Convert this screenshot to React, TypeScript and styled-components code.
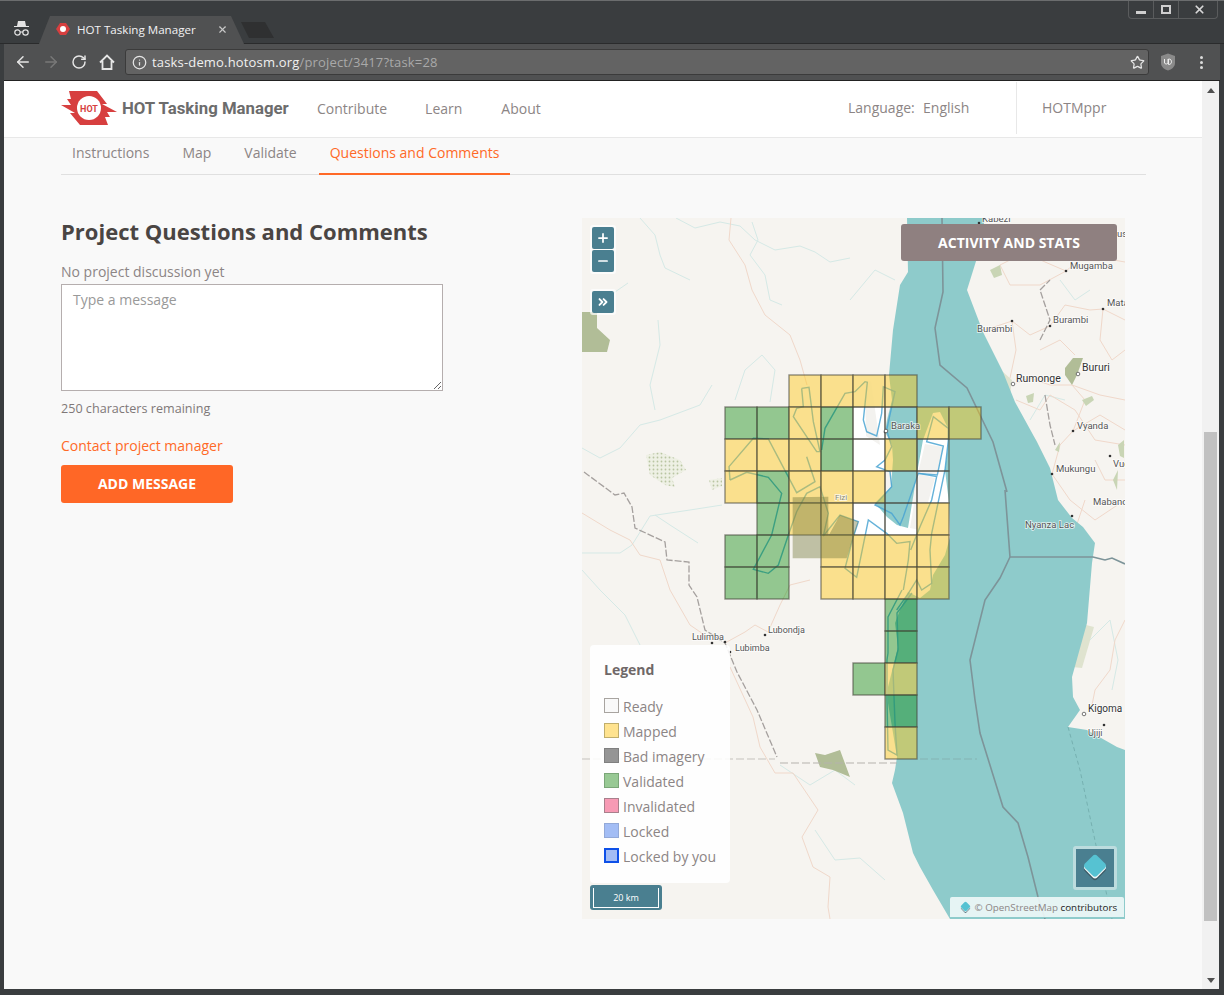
import React from "react";
import styled, { createGlobalStyle } from "styled-components";
import { ArrowLeft, ArrowRight, RotateCw, Star, Info, X, Plus, Minus, ChevronsRight } from "lucide-react";

const GlobalStyle = createGlobalStyle`
  html, body {
    margin: 0;
    padding: 0;
    background: #3a3d3f;
    overflow: hidden;
  }
  * {
    box-sizing: border-box;
  }
`;

const Window = styled.div`
  position: relative;
  width: 1224px;
  height: 995px;
  display: flex;
  flex-direction: column;
  background: #3a3d3f;
  border-top: 1px solid #6b6d6e;
  font-family: "Open Sans", sans-serif;
  overflow: hidden;
`;

const TitleBar = styled.div`
  height: 43px;
  flex: none;
  display: flex;
  align-items: flex-end;
  padding-left: 13px;
  border-bottom: 1px solid #2a2b2c;
`;

const Incognito = styled.svg`
  width: 17px;
  height: 17px;
  margin-bottom: 6px;
  margin-right: 9px;
  flex: none;
`;

const Tab = styled.div`
  width: 205px;
  height: 28px;
  margin-bottom: -1px;
  display: flex;
  align-items: center;
  padding: 0 0 2px 17px;
  color: #f2f2f2;
  font-size: 11.6px;
  background: #505152;
  clip-path: polygon(0 100%, 11px 0, 192px 0, 205px 100%);
  flex: none;
  z-index: 1;
`;

const TabTitle = styled.span`
  flex: 1;
  margin-left: 7px;
  white-space: nowrap;
`;

const TabClose = styled(X)`
  color: #c8c8c8;
  margin-right: 16px;
`;

const NewTab = styled.div`
  width: 33px;
  height: 16px;
  margin-left: -3px;
  margin-bottom: 5px;
  background: #2f3031;
  clip-path: polygon(0 0, 24px 0, 33px 100%, 8px 100%);
`;

const WindowControls = styled.div`
  position: absolute;
  top: 0;
  right: 6px;
  width: 90px;
  height: 18px;
  display: grid;
  grid-template-columns: 25px 25px 40px;
  border: 1px solid #5a5c5d;
  border-top: 0;
  border-radius: 0 0 4px 4px;
  color: #d8d8d8;
`;

const ControlCell = styled.div<{ $last?: boolean }>`
  display: flex;
  align-items: center;
  justify-content: center;
  border-right: ${(p) => (p.$last ? "0" : "1px solid #5a5c5d")};
`;

const MinimizeMark = styled.div`
  width: 10px;
  height: 3px;
  margin-top: 5px;
  background: #cfcfcf;
`;

const MaximizeMark = styled.div`
  width: 10px;
  height: 9px;
  border: 2px solid #cfcfcf;
`;

const Toolbar = styled.div`
  height: 37px;
  flex: none;
  display: flex;
  align-items: center;
  background: #505152;
  padding: 0 0 0 10px;
  margin: 0 4px;
  border-bottom: 1px solid #222;
  color: #e6e6e6;
`;

const NavButton = styled.div<{ $dim?: boolean }>`
  width: 18px;
  height: 18px;
  margin-right: 10px;
  display: flex;
  align-items: center;
  justify-content: center;
  color: ${(p) => (p.$dim ? "#787878" : "#e6e6e6")};
`;

const AddressBar = styled.div`
  width: 1024px;
  height: 26px;
  margin-left: -1px;
  display: flex;
  align-items: center;
  background: #636363;
  border: 1px solid #3b3b3b;
  border-radius: 3px;
  padding: 0 3px 0 6px;
  font-size: 13px;
  letter-spacing: 0.17px;
`;

const Url = styled.span`
  flex: 1;
  margin-left: 5px;
  color: #f0f0f0;
`;

const UrlPath = styled.span`
  color: #a9a9a9;
`;

const Shield = styled.svg`
  width: 16px;
  height: 18px;
  margin-left: 11px;
`;

const Dots = styled.div`
  display: grid;
  gap: 2px;
  margin-left: 24px;
`;

const Dot = styled.div`
  width: 3px;
  height: 3px;
  border-radius: 50%;
  background: #dcdcdc;
`;

const Viewport = styled.div`
  flex: 1;
  display: flex;
  margin: 0 5px 6px 4px;
  min-height: 0;
`;

const Page = styled.main`
  width: 1198px;
  background: #f9f9f9;
  color: #8c8585;
  font-size: 14px;
  overflow: hidden;
`;

const Header = styled.header`
  height: 57px;
  display: flex;
  align-items: center;
  background: #fff;
  border-bottom: 1px solid #e8e8e8;
  padding: 0 0 2px 57px;
`;

const LogoMark = styled.svg`
  width: 56px;
  height: 35px;
  flex: none;
`;

const Brand = styled.div`
  margin-left: 5px;
  width: 195px;
  font-family: Roboto, sans-serif;
  font-weight: 700;
  font-size: 16.8px;
  color: #6c6c6c;
  white-space: nowrap;
`;

const NavLink = styled.a<{ $gap: number }>`
  margin-right: ${(p) => p.$gap}px;
  white-space: nowrap;
`;

const HeaderRight = styled.div`
  margin-left: auto;
  height: 52px;
  margin-bottom: 1px;
  display: flex;
  align-items: center;
`;

const Language = styled.div`
  width: 168px;
  white-space: pre;
  word-spacing: 0.5px;
`;

const UserBox = styled.div`
  width: 186px;
  height: 100%;
  padding-left: 25px;
  display: flex;
  align-items: center;
  border-left: 1px solid #e8e8e8;
`;

const Tabs = styled.nav`
  margin: 0 56px 0 57px;
  height: 37px;
  display: flex;
  border-bottom: 1px solid #e0e0e0;
`;

const TabLink = styled.a<{ $active?: boolean }>`
  height: 37px;
  padding: 5px 11px 0;
  margin-right: 11px;
  line-height: 20px;
  color: ${(p) => (p.$active ? "#ff6927" : "#8c8585")};
  border-bottom: 2px solid ${(p) => (p.$active ? "#ff6927" : "transparent")};
  white-space: nowrap;
`;

const Content = styled.div`
  display: flex;
  padding: 43px 0 0 57px;
`;

const Discussion = styled.section`
  width: 382px;
  margin-right: 139px;
  flex: none;
`;

const Heading = styled.h2`
  margin: -1px 0 0;
  font-size: 22px;
  line-height: 28px;
  font-weight: 700;
  color: #4a4543;
  white-space: nowrap;
`;

const Note = styled.p`
  margin: 17px 0 0;
  line-height: 19px;
`;

const MessageBox = styled.textarea`
  display: block;
  width: 382px;
  height: 107px;
  margin: 3px 0 0;
  padding: 5px 11px;
  border: 1px solid #b5aeae;
  background: #fff;
  font-family: "Open Sans", sans-serif;
  font-size: 14px;
  line-height: 20px;
  outline: none;
  &::placeholder {
    color: #999;
  }
`;

const Remaining = styled.p`
  margin: 9px 0 0;
  font-size: 12.6px;
  line-height: 18px;
  color: #7f7878;
`;

const ContactLink = styled.a`
  display: block;
  margin-top: 18px;
  line-height: 20px;
  color: #ff6927;
`;

const AddButton = styled.button`
  display: block;
  width: 172px;
  height: 38px;
  margin-top: 9px;
  padding: 0 0 2px;
  border: 0;
  border-radius: 3px;
  background: #ff6726;
  color: #fff;
  font-family: "Open Sans", sans-serif;
  font-size: 14px;
  font-weight: 700;
  text-transform: uppercase;
`;

const MapPanel = styled.div`
  position: relative;
  width: 543px;
  height: 701px;
  flex: none;
  overflow: hidden;
`;

const MapDrawing = styled.svg`
  display: block;
  width: 543px;
  height: 701px;
  font-family: Roboto, sans-serif;
`;

const ZoomGroup = styled.div`
  position: absolute;
  top: 7px;
  left: 8px;
  padding: 2px;
  display: grid;
  gap: 1px;
  background: rgba(255, 255, 255, 0.7);
  border-radius: 3px;
`;

const CollapseGroup = styled(ZoomGroup)`
  top: 71px;
`;

const MapControl = styled.div`
  width: 22px;
  height: 22px;
  display: flex;
  align-items: center;
  justify-content: center;
  background: #4a7f90;
  border-radius: 2px;
  color: #fff;
`;

const ActivityButton = styled.button`
  position: absolute;
  top: 6px;
  left: 319px;
  width: 216px;
  height: 37px;
  border: 0;
  border-radius: 3px;
  background: #8f8080;
  color: #fff;
  font-family: "Open Sans", sans-serif;
  font-size: 14px;
  font-weight: 700;
  text-transform: uppercase;
`;

const Legend = styled.aside`
  position: absolute;
  left: 8px;
  top: 427px;
  width: 140px;
  height: 238px;
  padding: 15px 14px 0;
  background: rgba(255, 255, 255, 0.88);
  border-radius: 4px;
`;

const LegendTitle = styled.div`
  font-weight: 700;
  color: #6f6868;
  line-height: 19px;
  margin-bottom: 15px;
`;

const LegendRow = styled.div`
  height: 25px;
  display: flex;
  align-items: center;
  white-space: nowrap;
`;

const Swatch = styled.span<{ $fill: string; $line: string; $wide?: boolean }>`
  width: 15px;
  height: 15px;
  margin-right: 4px;
  margin-top: -3px;
  flex: none;
  background: ${(p) => p.$fill};
  border: ${(p) => (p.$wide ? 2 : 1)}px solid ${(p) => p.$line};
`;

const ScaleBar = styled.div`
  position: absolute;
  left: 8px;
  top: 667px;
  width: 72px;
  height: 25px;
  padding: 3px 3px 2px;
  background: #4a7f90;
  border-radius: 3px;
`;

const ScaleInner = styled.div`
  height: 100%;
  display: flex;
  align-items: center;
  justify-content: center;
  border: 1px solid #fff;
  border-top: 0;
  color: #fff;
  font-size: 9px;
`;

const LayerSwitch = styled.div`
  position: absolute;
  left: 491px;
  top: 628px;
  width: 44px;
  height: 44px;
  display: flex;
  align-items: center;
  justify-content: center;
  background: #4a7f90;
  border: 3px solid #bcdcde;
  border-radius: 3px;
`;

const Attribution = styled.div`
  position: absolute;
  left: 368px;
  top: 679px;
  width: 174px;
  height: 21px;
  display: flex;
  align-items: center;
  padding-left: 9px;
  background: rgba(240, 248, 248, 0.9);
  border-bottom: 1px solid #8ecbcb;
  border-radius: 2px 2px 0 0;
  font-size: 9.8px;
  color: #8c8585;
  white-space: pre;
`;

const AttributionDark = styled.span`
  color: #222;
`;

const Scrollbar = styled.div`
  width: 17px;
  flex: none;
  display: flex;
  flex-direction: column;
  align-items: center;
  background: #f1f1f1;
`;

const ScrollArrow = styled.div<{ $down?: boolean }>`
  width: 0;
  height: 0;
  margin: ${(p) => (p.$down ? "auto 0 6px" : "7px 0 0")};
  border-left: 4px solid transparent;
  border-right: 4px solid transparent;
  border-${(p) => (p.$down ? "top" : "bottom")}: 5px solid #505050;
`;

const ScrollThumb = styled.div`
  width: 13px;
  height: 489px;
  margin-top: 339px;
  background: #c1c1c1;
`;

type Pt = [number, number];

const CELL = 32;
const GX = 725;
const GY = 375;

// colour, col, row
const cells: [string, number, number][] = [
  ["m", 2, 0], ["m", 3, 0], ["m", 4, 0], ["m", 5, 0],
  ["v", 0, 1], ["v", 1, 1], ["m", 2, 1], ["v", 3, 1], ["r", 4, 1], ["r", 5, 1], ["m", 6, 1], ["m", 7, 1],
  ["m", 0, 2], ["m", 1, 2], ["m", 2, 2], ["v", 3, 2], ["r", 4, 2], ["m", 5, 2], ["r", 6, 2],
  ["m", 0, 3], ["v", 1, 3], ["m", 2, 3], ["m", 3, 3], ["m", 4, 3], ["r", 5, 3], ["r", 6, 3],
  ["v", 1, 4], ["m", 2, 4], ["m", 3, 4], ["r", 4, 4], ["r", 5, 4], ["m", 6, 4],
  ["v", 0, 5], ["v", 1, 5], ["m", 3, 5], ["m", 4, 5], ["m", 5, 5], ["m", 6, 5],
  ["v", 0, 6], ["v", 1, 6], ["m", 3, 6], ["m", 4, 6], ["m", 5, 6], ["m", 6, 6],
  ["v", 5, 7], ["v", 5, 8], ["v", 4, 9], ["m", 5, 9], ["v", 5, 10], ["m", 5, 11],
];

const cellFill: Record<string, string> = {
  m: "rgba(255,200,21,0.45)",
  v: "rgba(0,132,0,0.4)",
  r: "rgba(255,255,255,0)",
};

const lake: Pt[] = [
  [907, 218], [908, 272], [900, 285], [893, 330], [889, 375], [892, 400], [887, 420], [885, 432], [892, 445], [893, 460],
  [891, 487], [885, 493], [875, 503], [887, 517], [897, 525], [908, 528], [917, 473], [923, 440], [933, 413], [940, 412],
  [949, 430], [948, 445], [945, 470], [949, 503], [950, 537], [945, 555], [933, 575], [930, 590], [920, 598], [908, 592],
  [900, 610], [895, 623], [898, 647], [893, 667], [888, 687], [888, 703], [893, 733], [897, 757], [895, 770], [892, 783],
  [903, 813], [913, 853], [920, 867], [933, 890], [950, 919], [1125, 919], [1125, 750], [1117, 747], [1087, 730], [1068, 727],
  [1080, 710], [1073, 697], [1072, 677], [1087, 623], [1092, 563], [1095, 543], [1083, 527], [1072, 518], [1058, 500], [1050, 468],
  [1037, 442], [1015, 402], [1003, 372], [983, 332], [967, 290], [977, 258], [985, 218],
];

const z3 = (pts: Pt[]): Pt[] => pts.map(([x, y]) => [700 + x / 3, 360 + y / 3] as Pt);

const aoi: Pt[][] = [
  z3([[305, 85], [327, 82], [340, 185], [360, 275], [350, 275], [280, 170], [290, 145], [310, 140], [305, 85]]),
  z3([[365, 270], [375, 205], [435, 100], [465, 95], [495, 65], [502, 67], [490, 180], [500, 215], [530, 228], [545, 160], [550, 80], [585, 95], [560, 210], [575, 260], [555, 300], [530, 320], [570, 335], [575, 380], [525, 435], [575, 460], [600, 495], [610, 470], [655, 340], [710, 350], [695, 420], [660, 500], [632, 570]]),
  z3([[655, 340], [712, 345], [730, 258], [680, 245], [700, 170], [745, 205], [745, 240], [735, 330], [695, 520], [690, 570], [695, 670], [665, 690], [650, 660], [625, 700], [590, 750]]),
  z3([[90, 360], [87, 320], [160, 235], [205, 237], [290, 398], [345, 365], [320, 290]]),
  z3([[90, 360], [140, 337], [205, 352], [245, 400], [215, 525], [160, 628], [205, 640], [235, 615], [265, 525], [290, 455], [320, 400], [360, 380], [385, 460], [370, 528], [420, 465], [475, 485], [460, 530], [435, 625], [470, 652], [505, 480], [560, 520], [590, 550], [630, 545], [625, 600], [610, 690]]),
  [[912, 593], [897, 613], [898, 650], [893, 670], [895, 723], [897, 755], [888, 750], [887, 700], [887, 660], [888, 653], [888, 617], [902, 590]],
];

const rivers: Pt[][] = [
  [[640, 218], [655, 235], [660, 255], [665, 268], [690, 280]],
  [[676, 218], [695, 228], [720, 222], [740, 226], [755, 240], [775, 250], [800, 246], [815, 252], [830, 262], [850, 258]],
  [[752, 222], [758, 240], [750, 255], [765, 275], [770, 300], [782, 305]],
  [[582, 330], [600, 310], [615, 292], [628, 283]],
  [[658, 320], [660, 345], [655, 365], [650, 385], [655, 410]],
  [[770, 402], [775, 370], [762, 355], [745, 370], [735, 400]],
  [[582, 448], [600, 458], [620, 448], [640, 425], [660, 420], [700, 405], [712, 385]],
  [[582, 553], [620, 553], [632, 545], [650, 516], [690, 510], [722, 505]],
  [[655, 515], [670, 525], [698, 543]],
  [[582, 570], [600, 590], [625, 615], [640, 645]],
  [[850, 300], [875, 270], [895, 280]],
  [[815, 830], [835, 860], [860, 858], [885, 880]],
  [[780, 765], [810, 785], [835, 770], [855, 785]],
  [[1030, 420], [1045, 395], [1065, 400]],
  [[1060, 280], [1075, 300], [1090, 290]],
  [[1090, 640], [1110, 620], [1118, 660], [1112, 690]],
];

const roads: Pt[][] = [
  [[731, 218], [729, 240], [745, 265], [752, 290], [765, 315], [790, 335], [800, 360], [807, 385]],
  [[582, 513], [610, 530], [630, 540], [640, 555], [660, 560], [670, 590], [690, 625], [712, 640]],
  [[725, 643], [745, 632], [755, 625], [768, 632], [780, 605], [790, 585], [810, 580]],
  [[730, 667], [753, 717], [760, 747], [775, 773], [793, 773], [818, 810], [802, 837], [813, 867], [830, 877], [828, 907], [830, 919]],
  [[1016, 383], [1030, 378], [1050, 385], [1072, 385], [1100, 395], [1125, 400]],
  [[1012, 321], [1030, 335], [1050, 326], [1065, 305], [1090, 310], [1103, 309], [1125, 320]],
  [[985, 330], [1012, 321], [1016, 350], [1010, 378]],
  [[1066, 271], [1040, 285], [1010, 285], [1000, 265], [1030, 250]],
  [[1052, 474], [1060, 445], [1073, 431], [1100, 415], [1125, 430]],
  [[1052, 474], [1070, 500], [1095, 520], [1125, 500]],
  [[1073, 431], [1085, 400], [1072, 385]],
  [[1125, 620], [1115, 640], [1110, 670], [1095, 690], [1092, 705]],
  [[1058, 505], [1075, 530], [1085, 500]],
  [[1020, 250], [1045, 262], [1066, 271], [1085, 255], [1125, 262]],
  [[1016, 400], [1040, 410], [1050, 395], [1075, 410], [1095, 440], [1125, 445]],
  [[1103, 309], [1100, 340], [1112, 360], [1125, 350]],
  [[1040, 350], [1060, 340], [1075, 355]],
  [[1095, 460], [1105, 480], [1125, 480]],
  [[1000, 240], [1035, 225], [1075, 235]],
];

const borders: Pt[][] = [
  [[1005, 490], [1010, 557], [1093, 557], [1105, 560], [1112, 558], [1125, 564]],
  [[942, 218], [943, 292], [935, 328], [940, 365], [967, 388], [993, 442], [1007, 492]],
  [[1010, 557], [1000, 578], [985, 600], [970, 660], [975, 700], [980, 733], [1003, 807], [1018, 823], [1028, 857], [1038, 897], [1045, 919]],
];

const dashed: Pt[][] = [
  [[584, 472], [615, 495], [624, 493], [632, 507], [635, 528], [665, 542], [667, 560], [689, 562], [689, 585], [697, 597], [705, 630], [725, 643], [737, 672], [757, 710], [777, 757]],
  [[1040, 340], [1050, 320], [1040, 290], [1050, 280]],
  [[1045, 395], [1050, 425], [1055, 445]],
];

const forest: Pt[][] = [
  [[582, 312], [597, 312], [597, 328], [610, 340], [607, 352], [582, 352]],
  [[815, 753], [825, 755], [840, 750], [850, 777], [833, 770], [820, 767]],
  [[1065, 368], [1073, 358], [1083, 358], [1077, 375], [1072, 385], [1065, 375]],
];

const thicket: Pt[][] = [
  [[1026, 396], [1034, 393], [1033, 402], [1028, 403]],
  [[990, 270], [1000, 265], [1002, 275], [994, 278]],
  [[1118, 445], [1124, 440], [1124, 458], [1120, 456]],
  [[1082, 400], [1092, 396], [1094, 400], [1086, 406]],
  [[1055, 450], [1060, 442], [1059, 452]],
  [[1113, 480], [1118, 470], [1117, 490]],
];

const pale: Pt[][] = [
  [[1078, 623], [1094, 627], [1082, 668], [1072, 667]],
  [[1003, 372], [1012, 380], [1010, 395], [1001, 392]],
  [[1027, 428], [1036, 440], [1047, 463], [1037, 458]],
];

const stipple: Pt[][] = [
  [[646, 455], [660, 452], [680, 460], [686, 470], [672, 478], [675, 487], [665, 485], [650, 475]],
  [[709, 480], [722, 478], [722, 486], [712, 490]],
];

const labels: { t: string; x: number; y: number; s?: number; c?: string }[] = [
  { t: "Kabezi", x: 982, y: 222, s: 9.5 },
  { t: "us", x: 1117, y: 237, s: 9.5 },
  { t: "Mugamba", x: 1070, y: 269, s: 9.5 },
  { t: "Mata", x: 1107, y: 306, s: 9.5 },
  { t: "Burambi", x: 1053, y: 323, s: 9.5 },
  { t: "Burambi", x: 977, y: 332, s: 9.5 },
  { t: "Rumonge", x: 1016, y: 382, s: 10.5, c: "#333" },
  { t: "Bururi", x: 1082, y: 371, s: 10.5, c: "#333" },
  { t: "Vyanda", x: 1077, y: 429, s: 9.5 },
  { t: "Mukungu", x: 1056, y: 472, s: 9.5 },
  { t: "Vugizo", x: 1113, y: 467, s: 9.5 },
  { t: "Mabanda", x: 1093, y: 505, s: 9.5 },
  { t: "Nyanza Lac", x: 1025, y: 528, s: 9.5 },
  { t: "Baraka", x: 891, y: 429, s: 9.5 },
  { t: "Fizi", x: 835, y: 500, s: 8, c: "#8a8a70" },
  { t: "Lulimba", x: 692, y: 640, s: 9 },
  { t: "Lubondja", x: 768, y: 633, s: 9 },
  { t: "Lubimba", x: 735, y: 651, s: 9 },
  { t: "Kigoma", x: 1088, y: 712, s: 10, c: "#333" },
  { t: "Ujiji", x: 1088, y: 736, s: 9 },
];

const dots: Pt[] = [
  [1066, 271], [1103, 309], [1050, 326], [1012, 321], [1073, 431], [1052, 474], [1110, 456],
  [1072, 516], [885, 432], [712, 643], [765, 635], [730, 652], [725, 642], [1104, 725], [979, 223],
];

const rings: Pt[] = [[1013, 384], [1078, 374], [1084, 714], [886, 431]];

const toPoints = (pts: Pt[]) => pts.map((p) => p.join(",")).join(" ");

const legendItems = [
  { label: "Ready", fill: "#f9f9f9", line: "#a8a4a0" },
  { label: "Mapped", fill: "#ffe38f", line: "#c0ae6c" },
  { label: "Bad imagery", fill: "#959595", line: "#808080" },
  { label: "Validated", fill: "#98c994", line: "#7ba678" },
  { label: "Invalidated", fill: "#f79ab4", line: "#a8808c" },
  { label: "Locked", fill: "#a3bdf5", line: "#93a9d8" },
  { label: "Locked by you", fill: "#a3bdf5", line: "#0e50e8", wide: true },
];

function Diamond({ size }: { size: number }) {
  return (
    <svg width={size} height={size} viewBox="0 0 26 26">
      <rect x="5.5" y="6.5" width="15" height="15" rx="3" fill="#3c5a64" transform="rotate(45 13 14)" />
      <rect x="5.5" y="5" width="15" height="15" rx="3" fill="#f2f8f8" transform="rotate(45 13 12.5)" />
      <rect x="5.5" y="3.5" width="15" height="15" rx="3" fill="#56c2d2" transform="rotate(45 13 11)" />
    </svg>
  );
}

function MapArt() {
  return (
    <MapDrawing viewBox="582 218 543 701">
      <defs>
        <pattern id="stip" width="4" height="4" patternUnits="userSpaceOnUse">
          <rect width="4" height="4" fill="#eef0e4" />
          <circle cx="1.5" cy="1.5" r="0.9" fill="#b9c5a2" />
        </pattern>
      </defs>
      <rect x="582" y="218" width="543" height="701" fill="#f6f4f0" />
      {pale.map((p, i) => (
        <polygon key={i} points={toPoints(p)} fill="#dfe3cf" />
      ))}
      {rivers.map((p, i) => (
        <polyline key={i} points={toPoints(p)} fill="none" stroke="#d5e9e6" strokeWidth="1" />
      ))}
      {roads.map((p, i) => (
        <polyline key={i} points={toPoints(p)} fill="none" stroke="#f0d8ca" strokeWidth="1" />
      ))}
      {dashed.map((p, i) => (
        <polyline key={i} points={toPoints(p)} fill="none" stroke="#a5a09e" strokeWidth="1.3" strokeDasharray="7 2" />
      ))}
      <rect x="853" y="407" width="32" height="64" fill="#fff" />
      <rect x="853" y="503" width="64" height="32" fill="#fff" />
      <rect x="917" y="439" width="32" height="64" fill="#fff" />
      {forest.map((p, i) => (
        <polygon key={i} points={toPoints(p)} fill="#b1bd97" />
      ))}
      {thicket.map((p, i) => (
        <polygon key={i} points={toPoints(p)} fill="#c9d5b5" />
      ))}
      {stipple.map((p, i) => (
        <polygon key={i} points={toPoints(p)} fill="url(#stip)" />
      ))}
      <polygon points={toPoints(lake)} fill="#8ecbcb" />
      <polygon points="865,382 871,381 880,445 866,436" fill="#f3f2ef" />
      <polygon points="925,444 943,447 937,474 918,473" fill="#f3f2ef" />
      <polygon points="919,474 935,478 920,530 910,528" fill="#f3f2ef" />
      {aoi.map((p, i) => (
        <polyline key={i} points={toPoints(p)} fill="none" stroke="#4aa5d2" strokeWidth="1.4" strokeOpacity="0.85" />
      ))}
      <polyline points="582,759 775,759" fill="none" stroke="#c5c2bd" strokeWidth="1" strokeDasharray="8 3" />
      <polyline points="780,763 897,763" fill="none" stroke="#b5b2ad" strokeWidth="1" strokeDasharray="8 3" />
      <polyline points="920,759 977,759" fill="none" stroke="#84b3b3" strokeWidth="1" strokeDasharray="8 3" />
      <polyline points="1068,727 1080,770 1097,850 1112,919" fill="none" stroke="#6fa8a8" strokeWidth="0.8" strokeDasharray="4 3" />
      {borders.map((p, i) => (
        <polyline key={i} points={toPoints(p)} fill="none" stroke="#7d9499" strokeWidth="1.6" />
      ))}
      {cells.map(([k, c, r], i) => (
        <rect
          key={i}
          x={GX + c * CELL}
          y={GY + r * CELL}
          width={CELL}
          height={CELL}
          fill={cellFill[k]}
          stroke="rgba(70,70,60,0.6)"
          strokeWidth="1.4"
        />
      ))}
      <polygon
        points={toPoints(z3([[278, 412], [385, 410], [385, 528], [420, 465], [475, 485], [440, 595], [278, 595]]))}
        fill="rgba(115,120,60,0.42)"
      />
      {dots.map(([x, y], i) => (
        <circle key={i} cx={x} cy={y} r="1.3" fill="#333" />
      ))}
      {rings.map(([x, y], i) => (
        <circle key={i} cx={x} cy={y} r="1.8" fill="#fff" stroke="#555" strokeWidth="0.8" />
      ))}
      {labels.map((l, i) => (
        <text
          key={i}
          x={l.x}
          y={l.y}
          fontSize={l.s}
          fill={l.c ?? "#555"}
          stroke="rgba(255,255,255,0.75)"
          strokeWidth="1.6"
          paintOrder="stroke"
        >
          {l.t}
        </text>
      ))}
    </MapDrawing>
  );
}

export default function App() {
  return (
    <>
      <GlobalStyle />
      <Window>
        <TitleBar>
          <Incognito viewBox="0 0 17 17">
            <path d="M5 1h7l1 5h3v1H1V6h3z" fill="#e4e4e4" />
            <circle cx="4.5" cy="12.5" r="2.7" fill="none" stroke="#e4e4e4" strokeWidth="1.2" />
            <circle cx="12.5" cy="12.5" r="2.7" fill="none" stroke="#e4e4e4" strokeWidth="1.2" />
            <path d="M7 12h3" stroke="#e4e4e4" />
          </Incognito>
          <Tab>
            <svg width="14" height="14" viewBox="0 0 14 14">
              <polygon points="4,1 10,1 14,7 10,13 4,13 0,7" fill="#d73f3f" />
              <circle cx="7" cy="7" r="3" fill="#fff" />
            </svg>
            <TabTitle>HOT Tasking Manager</TabTitle>
            <TabClose size={11} strokeWidth={2.5} />
          </Tab>
          <NewTab />
        </TitleBar>
        <WindowControls>
          <ControlCell>
            <MinimizeMark />
          </ControlCell>
          <ControlCell>
            <MaximizeMark />
          </ControlCell>
          <ControlCell $last>
            <X size={13} strokeWidth={3.2} />
          </ControlCell>
        </WindowControls>
        <Toolbar>
          <NavButton>
            <ArrowLeft size={18} strokeWidth={2} />
          </NavButton>
          <NavButton $dim>
            <ArrowRight size={18} strokeWidth={2} />
          </NavButton>
          <NavButton>
            <RotateCw size={16} strokeWidth={2.2} />
          </NavButton>
          <NavButton>
            <svg width="18" height="18" viewBox="0 0 18 18" fill="none" stroke="currentColor" strokeWidth="1.8">
              <path d="M2 9.5 9 2.5l7 7M4.5 8v8h9V8" />
            </svg>
          </NavButton>
          <AddressBar>
            <Info size={15} strokeWidth={2} />
            <Url>
              tasks-demo.hotosm.org<UrlPath>/project/3417?task=28</UrlPath>
            </Url>
            <Star size={15} strokeWidth={2} />
          </AddressBar>
          <Shield viewBox="0 0 16 18">
            <path d="M8 0.5 15 3v7c0 4-3.5 6.5-7 7.5C4.5 16.5 1 14 1 10V3z" fill="#8a8a8a" />
            <path d="M4.5 6v4a2 2 0 0 0 3.5 0V6M8.5 6v5.5c4 .5 4-6 0-5.5" fill="none" stroke="#eee" strokeWidth="1" />
          </Shield>
          <Dots>
            <Dot />
            <Dot />
            <Dot />
          </Dots>
        </Toolbar>
        <Viewport>
          <Page>
            <Header>
              <LogoMark viewBox="0 0 56 35">
                <polygon
                  points="8,0 36,0 46,13 41,13 56,21 46,21 49,26 44,26 47,34 19,34 9,22 14,22 0,14 10,14 6,8 10,8"
                  fill="#d73f3f"
                />
                <circle cx="28" cy="17" r="12" fill="#fff" />
                <text x="28" y="20.5" textAnchor="middle" fontSize="9" fontWeight="700" fontFamily="Roboto, sans-serif" fill="#d73f3f">
                  HOT
                </text>
              </LogoMark>
              <Brand>HOT Tasking Manager</Brand>
              <NavLink $gap={38}>Contribute</NavLink>
              <NavLink $gap={39}>Learn</NavLink>
              <NavLink $gap={0}>About</NavLink>
              <HeaderRight>
                <Language>Language:  English</Language>
                <UserBox>HOTMppr</UserBox>
              </HeaderRight>
            </Header>
            <Tabs>
              <TabLink>Instructions</TabLink>
              <TabLink>Map</TabLink>
              <TabLink>Validate</TabLink>
              <TabLink $active>Questions and Comments</TabLink>
            </Tabs>
            <Content>
              <Discussion>
                <Heading>Project Questions and Comments</Heading>
                <Note>No project discussion yet</Note>
                <MessageBox placeholder="Type a message" />
                <Remaining>250 characters remaining</Remaining>
                <ContactLink>Contact project manager</ContactLink>
                <AddButton>Add message</AddButton>
              </Discussion>
              <MapPanel>
                <MapArt />
                <ZoomGroup>
                  <MapControl>
                    <Plus size={14} strokeWidth={3} />
                  </MapControl>
                  <MapControl>
                    <Minus size={14} strokeWidth={3} />
                  </MapControl>
                </ZoomGroup>
                <CollapseGroup>
                  <MapControl>
                    <ChevronsRight size={14} strokeWidth={3.2} />
                  </MapControl>
                </CollapseGroup>
                <ActivityButton>Activity and stats</ActivityButton>
                <Legend>
                  <LegendTitle>Legend</LegendTitle>
                  {legendItems.map((item) => (
                    <LegendRow key={item.label}>
                      <Swatch $fill={item.fill} $line={item.line} $wide={item.wide} />
                      {item.label}
                    </LegendRow>
                  ))}
                </Legend>
                <ScaleBar>
                  <ScaleInner>20 km</ScaleInner>
                </ScaleBar>
                <LayerSwitch>
                  <Diamond size={30} />
                </LayerSwitch>
                <Attribution>
                  <Diamond size={13} />
                  {" © OpenStreetMap "}
                  <AttributionDark>contributors</AttributionDark>
                </Attribution>
              </MapPanel>
            </Content>
          </Page>
          <Scrollbar>
            <ScrollArrow />
            <ScrollThumb />
            <ScrollArrow $down />
          </Scrollbar>
        </Viewport>
      </Window>
    </>
  );
}
